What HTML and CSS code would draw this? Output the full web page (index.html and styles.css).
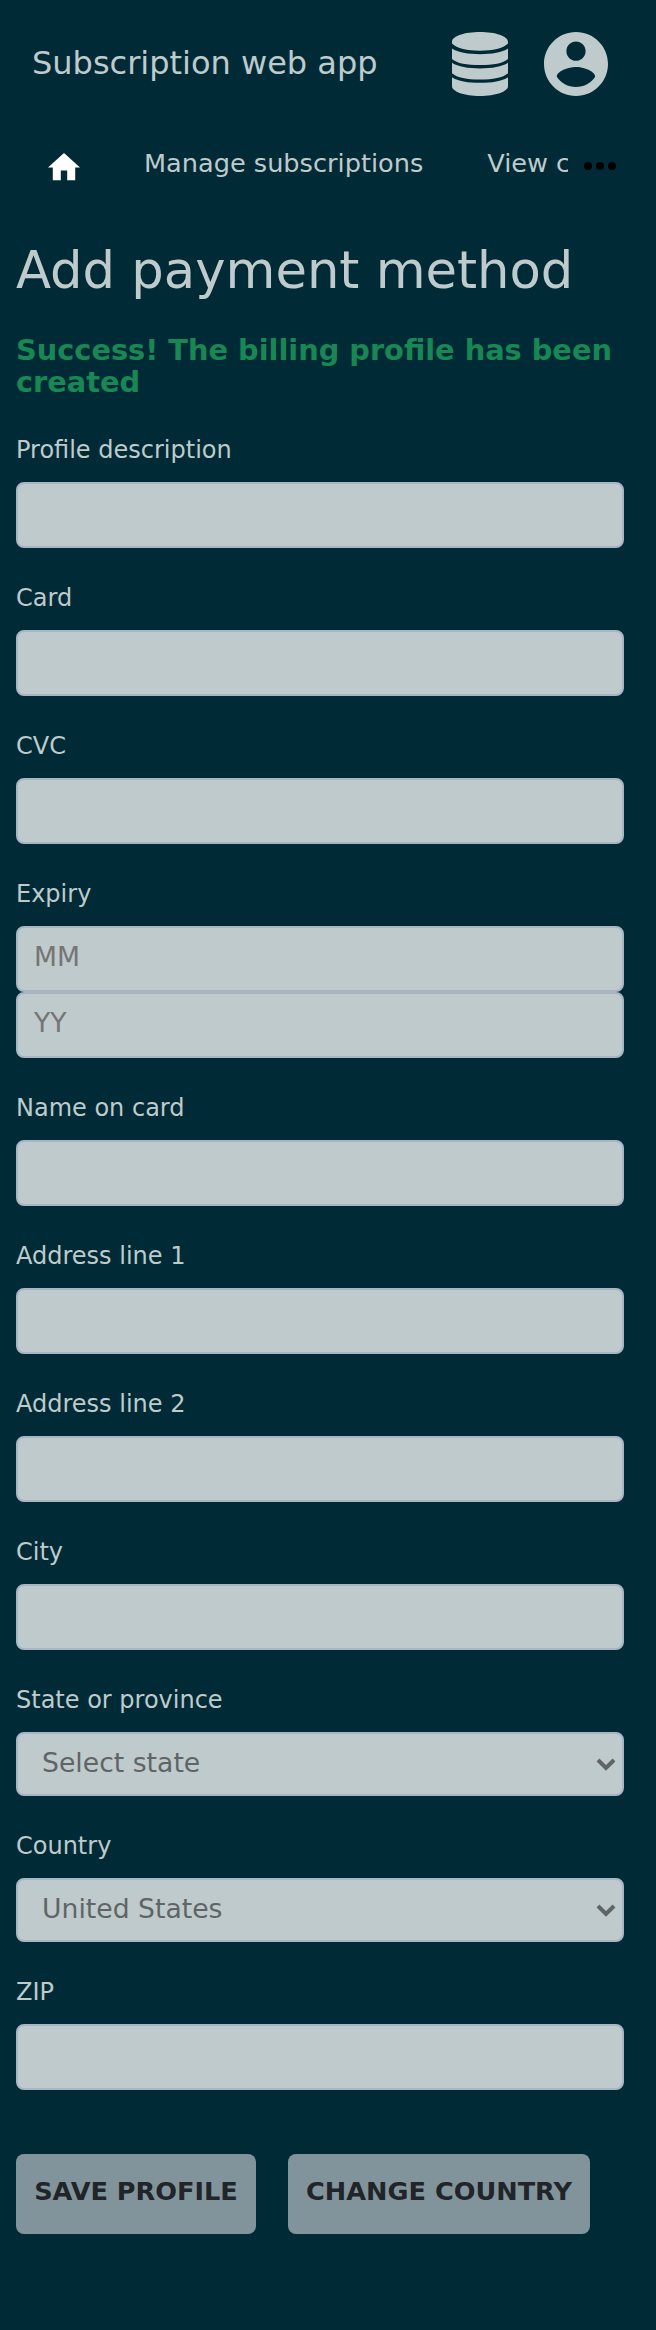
FILE: index.html
```html
<!DOCTYPE html>
<html lang="en">
<head>
<meta charset="utf-8">
<title>Add payment method</title>
<link rel="stylesheet" href="styles.css">
</head>
<body>
<header class="topbar">
  <span class="brand">Subscription web app</span>
  <svg class="icon-db" viewBox="0 0 56 64"><path d="M0 10C0 4 12.500 0 28 0s28 4 28 10v1.500C51 16.500 41 18.700 28 18.700S5 16.500 0 11.500zM0 16.500c6 4 16 5.700 28 5.700s22-1.700 28-5.700v10.500C51 31.500 41 33 28 33S5 31.500 0 27zM0 30.800c6 4 16 5.600 28 5.600s22-1.600 28-5.600v10.500C51 46 41 47.500 28 47.500S5 46 0 41.300zM0 45.200c6 4 16 5.600 28 5.600s22-1.600 28-5.600v9C56 59.500 43.500 64 28 64S0 59.500 0 54.200z"/></svg>
  <svg class="icon-user" viewBox="2 2 20 20"><path fill-rule="evenodd" d="M12 2C6.480 2 2 6.480 2 12s4.480 10 10 10 10-4.480 10-10S17.520 2 12 2zm0 3c1.660 0 3 1.340 3 3s-1.340 3-3 3-3-1.340-3-3 1.340-3 3-3zm0 14.200c-2.500 0-4.710-1.280-6-3.220.030-1.990 4-3.080 6-3.080 1.990 0 5.970 1.090 6 3.080-1.290 1.940-3.500 3.220-6 3.220z"/></svg>
</header>
<nav class="nav">
  <svg class="icon-home" viewBox="0 0 32 28"><path d="M12.800 27.200v-9.600h6.400v9.600h8V14.400H32L16 0 0 14.400h4.800v12.800z"/></svg>
  <span class="nav-link">Manage subscriptions</span>
  <span class="nav-link nav-clipped">View c</span>
  <svg class="icon-more" viewBox="0 0 32 8"><circle cx="4" cy="4" r="4"/><circle cx="16" cy="4" r="4"/><circle cx="28" cy="4" r="4"/></svg>
</nav>
<main class="content">
  <h1 class="title">Add payment method</h1>
  <p class="success">Success! The billing profile has been created</p>
  <form class="form">
    <label class="field">Profile description<input class="input"></label>
    <label class="field">Card<input class="input"></label>
    <label class="field">CVC<input class="input"></label>
    <div class="field"><span>Expiry</span><input class="input" placeholder="MM"><input class="input" placeholder="YY"></div>
    <label class="field">Name on card<input class="input"></label>
    <label class="field">Address line 1<input class="input"></label>
    <label class="field">Address line 2<input class="input"></label>
    <label class="field">City<input class="input"></label>
    <div class="field"><span>State or province</span>
      <div class="select">Select state<svg class="chevron" viewBox="0 0 20 12"><path d="M2 2l8 8 8-8"/></svg></div></div>
    <div class="field"><span>Country</span>
      <div class="select">United States<svg class="chevron" viewBox="0 0 20 12"><path d="M2 2l8 8 8-8"/></svg></div></div>
    <label class="field">ZIP<input class="input"></label>
    <div class="actions">
      <button class="btn btn-save" type="button">SAVE PROFILE</button>
      <button class="btn btn-country" type="button">CHANGE COUNTRY</button>
    </div>
  </form>
</main>
</body>
</html>
```
FILE: styles.css
```css
* { box-sizing: border-box; }
body {
  margin: 0;
  min-height: 2330px;
  background: #002b36;
  color: #bfcacc;
  font-family: "DejaVu Sans", sans-serif;
}
.topbar {
  display: flex;
  align-items: center;
  height: 128px;
  padding: 0 48px 0 32px;
}
.brand { flex: 1; padding-bottom: 2px; font-size: 32px; line-height: 38px; }
.icon-db { width: 56px; height: 64px; margin-right: 36px; fill: #bfcacc; }
.icon-user { width: 64px; height: 64px; fill: #bfcacc; }
.nav {
  display: flex;
  align-items: center;
  height: 72px;
  padding-left: 48px;
  font-size: 25.6px;
  line-height: 30px;
  white-space: nowrap;
}
.icon-home { width: 32px; height: 28px; margin: 5.6px 64px 0 0; fill: #fff; }
.nav-link { margin-right: 64px; padding-bottom: 2px; }
.nav-clipped { width: 81px; overflow: hidden; margin-right: 15.5px; }
.icon-more { width: 32px; height: 8px; margin-top: 4px; }
.content { padding: 40px 32px 0 16px; }
.title { margin: 0; font-size: 51.2px; font-weight: 400; line-height: 60px; }
.success {
  margin: 34px 0 0;
  color: #198754;
  font-size: 28.8px;
  font-weight: 700;
  line-height: 32px;
}
.form { margin-top: 36px; }
.field {
  display: flex;
  flex-direction: column;
  margin-bottom: 34px;
  font-size: 24px;
  line-height: 32px;
}
.input, .select {
  width: 608px;
  height: 66px;
  border: 2px solid #a9b5c3;
  border-radius: 8px;
  background: #bfcacc;
  font-family: inherit;
  font-size: 26.667px;
}
.input { padding: 0 16px 5px; outline: 0; }
.field > .input:first-of-type, .select { margin-top: 16px; }
.input::placeholder { color: #757575; opacity: 1; }
.select {
  display: flex;
  justify-content: space-between;
  align-items: center;
  height: 64px;
  padding: 0 6px 3px 24px;
  color: #5f6566;
  line-height: 31px;
}
.chevron {
  width: 20px;
  height: 12px;
  margin-top: 3px;
  overflow: visible;
  fill: none;
  stroke: #5f6566;
  stroke-width: 4;
}
.actions { display: flex; gap: 32px; margin-top: 64px; }
.btn {
  height: 80px;
  padding: 0 0 6px;
  border: 0;
  border-radius: 8px;
  background: #81949b;
  color: #212529;
  font-family: inherit;
  font-size: 25.6px;
  font-weight: 700;
}
.btn-save { width: 240px; }
.btn-country { width: 302px; }
```
